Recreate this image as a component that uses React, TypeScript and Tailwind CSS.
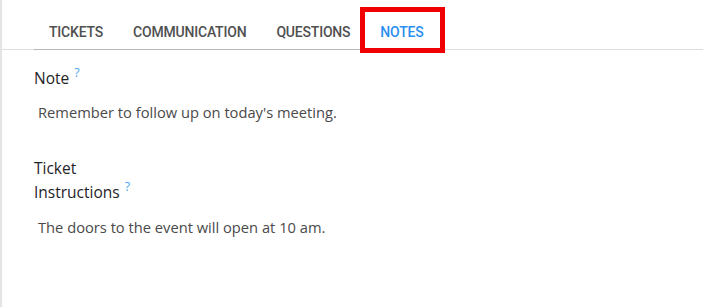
import React from "react";

const tabs = ["TICKETS", "COMMUNICATION", "QUESTIONS", "NOTES"];

function Help() {
  return <span className="relative -top-[7px] ml-[5px] text-[12.5px] leading-none text-[#4fa6f4]">?</span>;
}

export default function App() {
  return (
    <div className="w-[703px] h-[307px] bg-white border-l-2 border-[#e4e4e4] overflow-hidden flex flex-col">
      <div className="h-[50px] border-b border-[#dedede] flex items-stretch pl-[32px] font-['Roboto',sans-serif]">
        <div className="flex border-b border-[#b8b8b8] -mb-px">
          {tabs.map((t) => (
            <div
              key={t}
              className={`relative flex items-center px-[15px] pt-[15px] text-[14px] font-medium tracking-[-0.2px] ${
                t === "NOTES" ? "text-[#2a8ff0]" : "text-[#505050]"
              }`}
            >
              {t}
              {t === "NOTES" && (
                <div className="absolute left-[-5px] right-[-6px] top-[7px] bottom-[-4px] border-[5px] border-[#f00000]" />
              )}
            </div>
          ))}
        </div>
      </div>
      <div className="flex flex-col pl-[32px] pt-[17px] text-[15.5px] text-[#1f2328] font-['Open_Sans',sans-serif]">
        <div className="leading-[23px]">
          Note
          <Help />
        </div>
        <div className="mt-[11px] pl-[4px] text-[14.7px] text-[#4a4a4a]">
          Remember to follow up on today's meeting.
        </div>
        <div className="mt-[33px] w-[100px] leading-[24px]">
          Ticket Instructions
          <Help />
        </div>
        <div className="mt-[12px] pl-[4px] text-[14.7px] text-[#4a4a4a]">
          The doors to the event will open at 10 am.
        </div>
      </div>
    </div>
  );
}
